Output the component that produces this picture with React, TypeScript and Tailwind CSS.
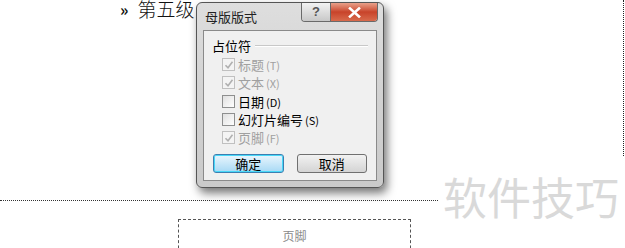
import React from "react";

const font = { fontFamily: '"SimSun","Noto Sans CJK SC",sans-serif' };

function Check({ label, hot, checked, disabled }: { label: string; hot: string; checked?: boolean; disabled?: boolean }) {
  return (
    <div className="flex h-[18.3px] items-center gap-[3px]">
      <div
        className={
          "flex h-[13px] w-[13px] items-center justify-center border " +
          (disabled ? "border-[#c0c0c0] bg-[#f4f4f4]" : "border-[#8e8f8f] bg-gradient-to-br from-[#e0e0e0] to-[#ffffff]")
        }
      >
        {checked && (
          <svg width="10" height="10" viewBox="0 0 10 10">
            <path d="M1.5 5.2 L4 7.8 L8.5 1.8" fill="none" stroke="#b0b0b0" strokeWidth="1.6" />
          </svg>
        )}
      </div>
      <span className={"text-[13px] leading-none " + (disabled ? "text-[#a0a0a0]" : "text-black")}>
        {label}
        <span className="ml-[2px] text-[11px]">({hot})</span>
      </span>
    </div>
  );
}

export default function App() {
  return (
    <div className="relative h-[248px] w-[625px] overflow-hidden bg-white" style={font}>
      {/* slide text */}
      <div className="absolute left-[120px] top-[-5px] flex items-center gap-[9px] text-[19px] font-light text-[#111]">
        <span className="text-[16px] font-bold">»</span>
        <span>第五级</span>
      </div>

      {/* right dotted edge */}
      <div className="absolute right-[1px] top-0 h-[156px] border-r border-dotted border-[#222]" />

      {/* separator */}
      <div className="absolute left-0 top-[200px] w-[438px] border-t border-dotted border-[#333]" />

      {/* footer placeholder */}
      <div className="absolute left-[178px] top-[219px] flex h-[40px] w-[233px] justify-center border border-dashed border-[#555] pt-[7px]">
        <span className="text-[12px] text-[#8a8a8a]">页脚</span>
      </div>

      {/* watermark */}
      <div
        className="absolute left-[443px] top-[174px] whitespace-nowrap text-[44px] leading-none text-[#d9d9d9]"
        style={{ fontFamily: '"Noto Sans CJK SC",sans-serif' }}
      >
        软件技巧
      </div>

      {/* dialog */}
      <div className="absolute left-[196px] top-[2px] flex h-[186px] w-[188px] flex-col rounded-[6px] border border-[#555] bg-gradient-to-b from-[#dedede] via-[#d2d2d2] to-[#cacaca] shadow-[3px_5px_10px_rgba(0,0,0,0.55)]">
        <div className="flex h-[27px] items-start">
          <span className="ml-[8px] mt-[7px] text-[13px] leading-none text-[#222]">母版版式</span>
          <div className="ml-auto mr-[5px] flex h-[19px] overflow-hidden rounded-b-[4px] border border-t-0 border-[#6a6a6a]">
            <div
              className="flex w-[29px] items-center justify-center border-r border-[#6a6a6a] bg-gradient-to-b from-[#f2f2f2] to-[#c8c8c8] text-[13px] font-bold text-[#555]"
              style={{ fontFamily: '"Liberation Sans",sans-serif' }}
            >
              ?
            </div>
            <div className="flex w-[46px] items-center justify-center bg-gradient-to-b from-[#e8a08a] via-[#c8432a] to-[#d86a4c]">
              <svg width="13" height="11" viewBox="0 0 13 11">
                <path d="M2 1.5 L11 9.5 M11 1.5 L2 9.5" stroke="#fff" strokeWidth="2.6" strokeLinecap="square" />
              </svg>
            </div>
          </div>
        </div>
        <div className="mx-[6px] mb-[6px] flex flex-1 flex-col border border-[#8a8a8a] bg-[#f0f0f0] px-[8px] pt-[5px]">
          <div className="flex items-center gap-[4px]">
            <span className="text-[13px] text-black">占位符</span>
            <div className="h-[2px] flex-1 border-t border-b border-t-[#c8c8c8] border-b-white" />
          </div>
          <div className="ml-[10px] flex flex-col">
            <Check label="标题" hot="T" checked disabled />
            <Check label="文本" hot="X" checked disabled />
            <Check label="日期" hot="D" />
            <Check label="幻灯片编号" hot="S" />
            <Check label="页脚" hot="F" checked disabled />
          </div>
          <div className="mt-[7px] flex gap-[13px] px-[1px]">
            <button className="flex h-[19px] w-[72px] items-center justify-center rounded-[3px] border border-[#3c7fb1] bg-gradient-to-b from-[#eaf6fd] to-[#a7d9f5] text-[13px] text-black shadow-[inset_0_0_0_1px_#48d8f8]">
              确定
            </button>
            <button className="flex h-[19px] w-[72px] items-center justify-center rounded-[3px] border border-[#707070] bg-gradient-to-b from-[#f2f2f2] to-[#d4d4d4] text-[13px] text-black">
              取消
            </button>
          </div>
        </div>
      </div>
    </div>
  );
}
